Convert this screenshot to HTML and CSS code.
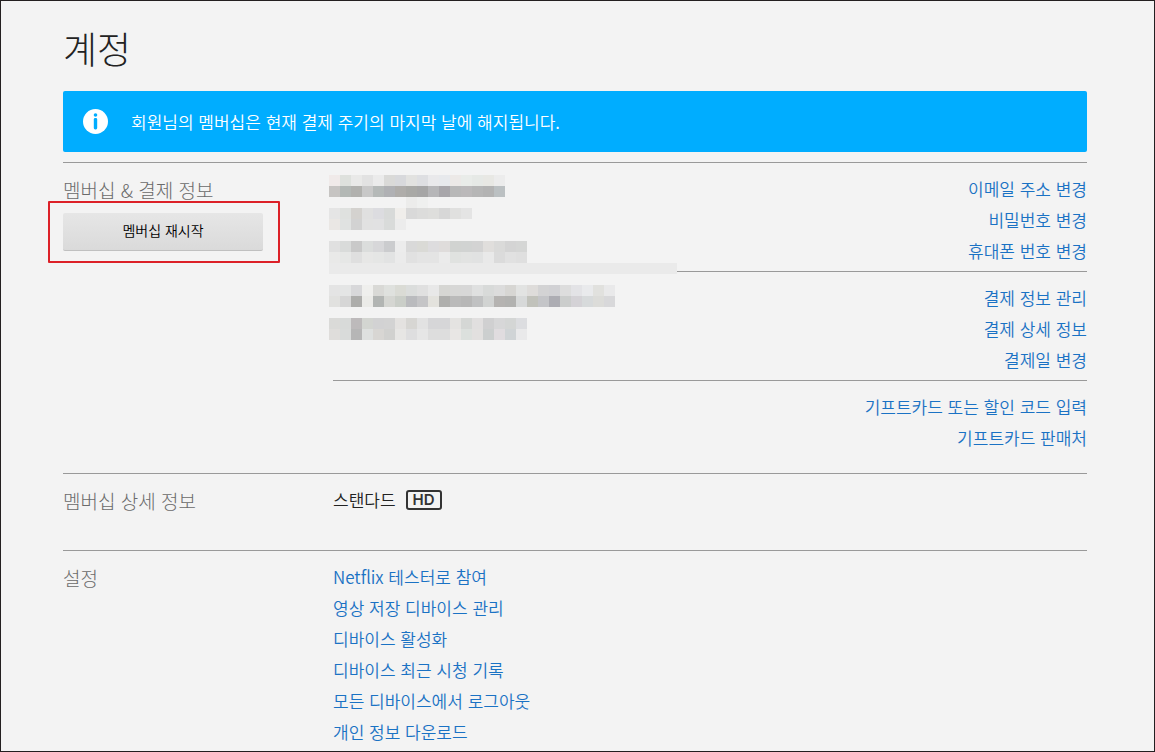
FILE: index.html
```html
<!DOCTYPE html>
<html lang="ko">
<head>
  <meta charset="UTF-8" />
  <meta name="viewport" content="width=device-width, initial-scale=1" />
  <title>계정</title>
  <link rel="stylesheet" href="styles.css">
</head>
<body>
  <main class="page">
    <h1>계정</h1>

    <div class="aviso">
      <svg class="aviso-icon" viewBox="0 0 25 25" width="25" height="25" aria-hidden="true">
        <circle cx="12.5" cy="12.5" r="12.5" fill="#fff" />
        <circle cx="12.5" cy="6" r="1.8" fill="#00adff" />
        <rect x="10.8" y="9" width="3.4" height="11.5" rx="1.4" fill="#00adff" />
      </svg>
      <p>회원님의 멤버십은 현재 결제 주기의 마지막 날에 해지됩니다.</p>
    </div>

    <section class="account-section">
      <div class="section-side">
        <h2>멤버십 &amp; 결제 정보</h2>
        <div class="restart">
          <button type="button" class="btn">멤버십 재시작</button>
        </div>
      </div>
      <div class="section-body">
        <ul class="links links-right">
          <li><a href="#">이메일 주소 변경</a></li>
          <li><a href="#">비밀번호 변경</a></li>
          <li><a href="#">휴대폰 번호 변경</a></li>
        </ul>
        <ul class="links links-right">
          <li><a href="#">결제 정보 관리</a></li>
          <li><a href="#">결제 상세 정보</a></li>
          <li><a href="#">결제일 변경</a></li>
        </ul>
        <ul class="links links-right">
          <li><a href="#">기프트카드 또는 할인 코드 입력</a></li>
          <li><a href="#">기프트카드 판매처</a></li>
        </ul>
        <svg class="mosaic" id="mosaic" width="348" height="165" shape-rendering="crispEdges" aria-hidden="true"></svg>
      </div>
    </section>

    <section class="account-section section-plan">
      <div class="section-side">
        <h2>멤버십 상세 정보</h2>
      </div>
      <div class="section-body">
        <p class="plan">스탠다드 <span class="hd">HD</span></p>
      </div>
    </section>

    <section class="account-section section-settings">
      <div class="section-side">
        <h2>설정</h2>
      </div>
      <div class="section-body">
        <ul class="links">
          <li><a href="#">Netflix 테스터로 참여</a></li>
          <li><a href="#">영상 저장 디바이스 관리</a></li>
          <li><a href="#">디바이스 활성화</a></li>
          <li><a href="#">디바이스 최근 시청 기록</a></li>
          <li><a href="#">모든 디바이스에서 로그아웃</a></li>
          <li><a href="#">개인 정보 다운로드</a></li>
        </ul>
      </div>
    </section>
  </main>

  <script>
    // personal data is hidden behind 11px blocks, "-" leaves a block empty
    const CELL = 11;
    const rows = {
      0: "f0eae9 dee1dd e9e9e8 e2e2e2 ebebeb dadad8 d8d9dc e2e2e0 dedfe2 e9e9eb e7e9ec ece9e7 e9ece9 e6e9e6 e8e8e4 ececec",
      1: "c6c4c2 b3b8b5 b1b1ae c8c8c8 b5b9b8 b0b1b4 afadaa a9a9a6 a6a6a6 b6b6b8 a8a6aa b8b8b8 bbb9ba b6b6b6 b3b3b3 bbc0c2",
      2: "- - - - - - - ececeb eff0ef",
      3: "e5e5e5 dfe1df d4d2cf e0e0e0 dcdce0 d8dad9 f0eeeb d9d9d9 dcdcdb dededc d7d7d7 e0e0df e4e4e4",
      4: "eae7e4 e0e2e1 d2d2d2 e1e1e1 e1e1e2 d9dbda ececec",
      6: "e0e0e0 d9dbda c9c9c9 dbdddc d7d7d9 cbccce ececec d9d9d9 dadad6 dddcde dfdcdb d1d3d1 d1d3d2 d3d3d3 e0dedc dadad9 d4d4d4 d5d6d5",
      7: "e9e9e8 e6e7e6 dfdfdf e7e7e6 e5e6e5 e2e3e3 ebebeb e1e1e1 e4e4e4 e4e4e4 ebebeb e0e2e0 e2e3e2 e1e2e2 e9e9e9 dbdbdb e1e1e1 dfdfdf",
      10: "e4e4e4 e4e5e5 d8d8da efefed d9d9d6 dfe1de dadbd5 dbdddc e0e0e0 e8e8e8 d6d6d3 d7d7d6 d7d7d7 dfe0e0 d8dad9 dcdcdc d7d6d3 e2e3e2 dedcda d3d3d4 d1d1d4 dddddd e3e3e6 e9eaec e1e1de e9e9ea",
      11: "e1e1df d6d6d6 adadab ebebe8 b2b5b3 d5d6d2 cacec8 babbbe c5c5c7 e3e2dd afafad bababa b7b7b7 c0c1c2 d1d3d2 b5b3b1 b2b2b0 d7d9d9 c1c2bb c4c5c8 adadb3 cbcdcc d4d2d6 d7dadb dcdcd9 d8d8da",
      13: "dadad8 d8dad9 bdbabb d3d5d1 d2d2d3 d3d3d3 e4e2e0 d7d6d3 e2e2e2 d6d6d8 d6d6d8 e4e3e1 d5d7d5 e1dfdf d0d0d1 d7d7d8 d4d6d5 dcdde0",
      14: "dfdddb d9dbda b6b6b6 dee0df d8d6d3 d1d1cf e7e6e4 dededf e6e6e6 dddddd dddddd e8e6e4 dce0dd e2e0df cccfcf e0dcdf d0d4d6 e9e9ea"
    };

    function block(x, y, w, color) {
      const rect = document.createElementNS("http://www.w3.org/2000/svg", "rect");
      rect.setAttribute("x", x);
      rect.setAttribute("y", y);
      rect.setAttribute("width", w);
      rect.setAttribute("height", CELL);
      rect.setAttribute("fill", color);
      document.getElementById("mosaic").appendChild(rect);
    }

    for (const row in rows) {
      rows[row].split(" ").forEach((color, i) => {
        if (color !== "-") block(i * CELL, row * CELL, CELL, "#" + color);
      });
    }
    // long strip over the divider
    block(0, 8 * CELL, 348, "#eaeaea");
  </script>
</body>
</html>
```

FILE: styles.css
```css
* {
  box-sizing: border-box;
}
body {
  margin: 0;
  min-height: 100vh;
  border: 1px solid #231f20;
  background: #f3f3f3;
  color: #333;
  font-family: "Noto Sans CJK KR", sans-serif;
  font-size: 17px;
  font-weight: 350;
  line-height: 31px;
}
.page {
  padding: 18px 67px 0 62px;
}
h1, h2, p, ul {
  margin: 0;
  padding: 0;
}
h1 {
  color: #222;
  font-size: 37px;
  font-weight: 300;
  line-height: 58px;
}
.aviso {
  display: flex;
  align-items: center;
  gap: 23px;
  margin: 14px 0 10px;
  padding: 15px 20px;
  background: #00adff;
  border-radius: 2px;
  color: #fff;
}
.aviso-icon {
  flex: none;
}
.account-section {
  display: flex;
  padding-bottom: 15px;
  border-top: 1px solid #999;
}
.section-side {
  flex: none;
  width: 270px;
  padding-top: 11px;
}
.section-body {
  position: relative;
  flex: 1;
}
h2 {
  color: #6a6a6a;
  font-size: 19px;
  font-weight: 300;
  line-height: 31px;
}
.restart {
  position: relative;
  width: 200px;
  margin-top: 8px;
}
/* red highlight around the button */
.restart::before {
  content: "";
  position: absolute;
  inset: -12px -17px -12px -15px;
  border: 2px solid #dc2028;
  border-radius: 1px;
  pointer-events: none;
}
.btn {
  display: block;
  width: 100%;
  height: 38px;
  padding: 0 0 4px;
  border: none;
  border-bottom: 1px solid #c0c0c0;
  border-radius: 2px;
  background: linear-gradient(#e6e6e6, #dadada);
  color: #000;
  font-family: inherit;
  font-size: 14px;
  font-weight: 350;
  cursor: pointer;
}
.links {
  padding: 10px 0 5px;
  list-style: none;
}
.links + .links {
  border-top: 1px solid #999;
}
.links-right {
  text-align: right;
}
a {
  color: #1a72c4;
  text-decoration: none;
}
a:hover {
  text-decoration: underline;
}
.mosaic {
  position: absolute;
  top: 12px;
  left: -4px;
}
.section-plan {
  padding-bottom: 34px;
}
.plan {
  display: flex;
  align-items: center;
  gap: 10px;
  padding-top: 10px;
  color: #222;
}
.hd {
  padding: 0 5px;
  border: 2px solid #333;
  border-radius: 3px;
  color: #333;
  font-family: Inter, sans-serif;
  font-size: 15px;
  font-weight: 600;
  line-height: 16px;
}
.section-settings {
  padding-bottom: 0;
}
.section-settings .links {
  padding-bottom: 0;
}
```
